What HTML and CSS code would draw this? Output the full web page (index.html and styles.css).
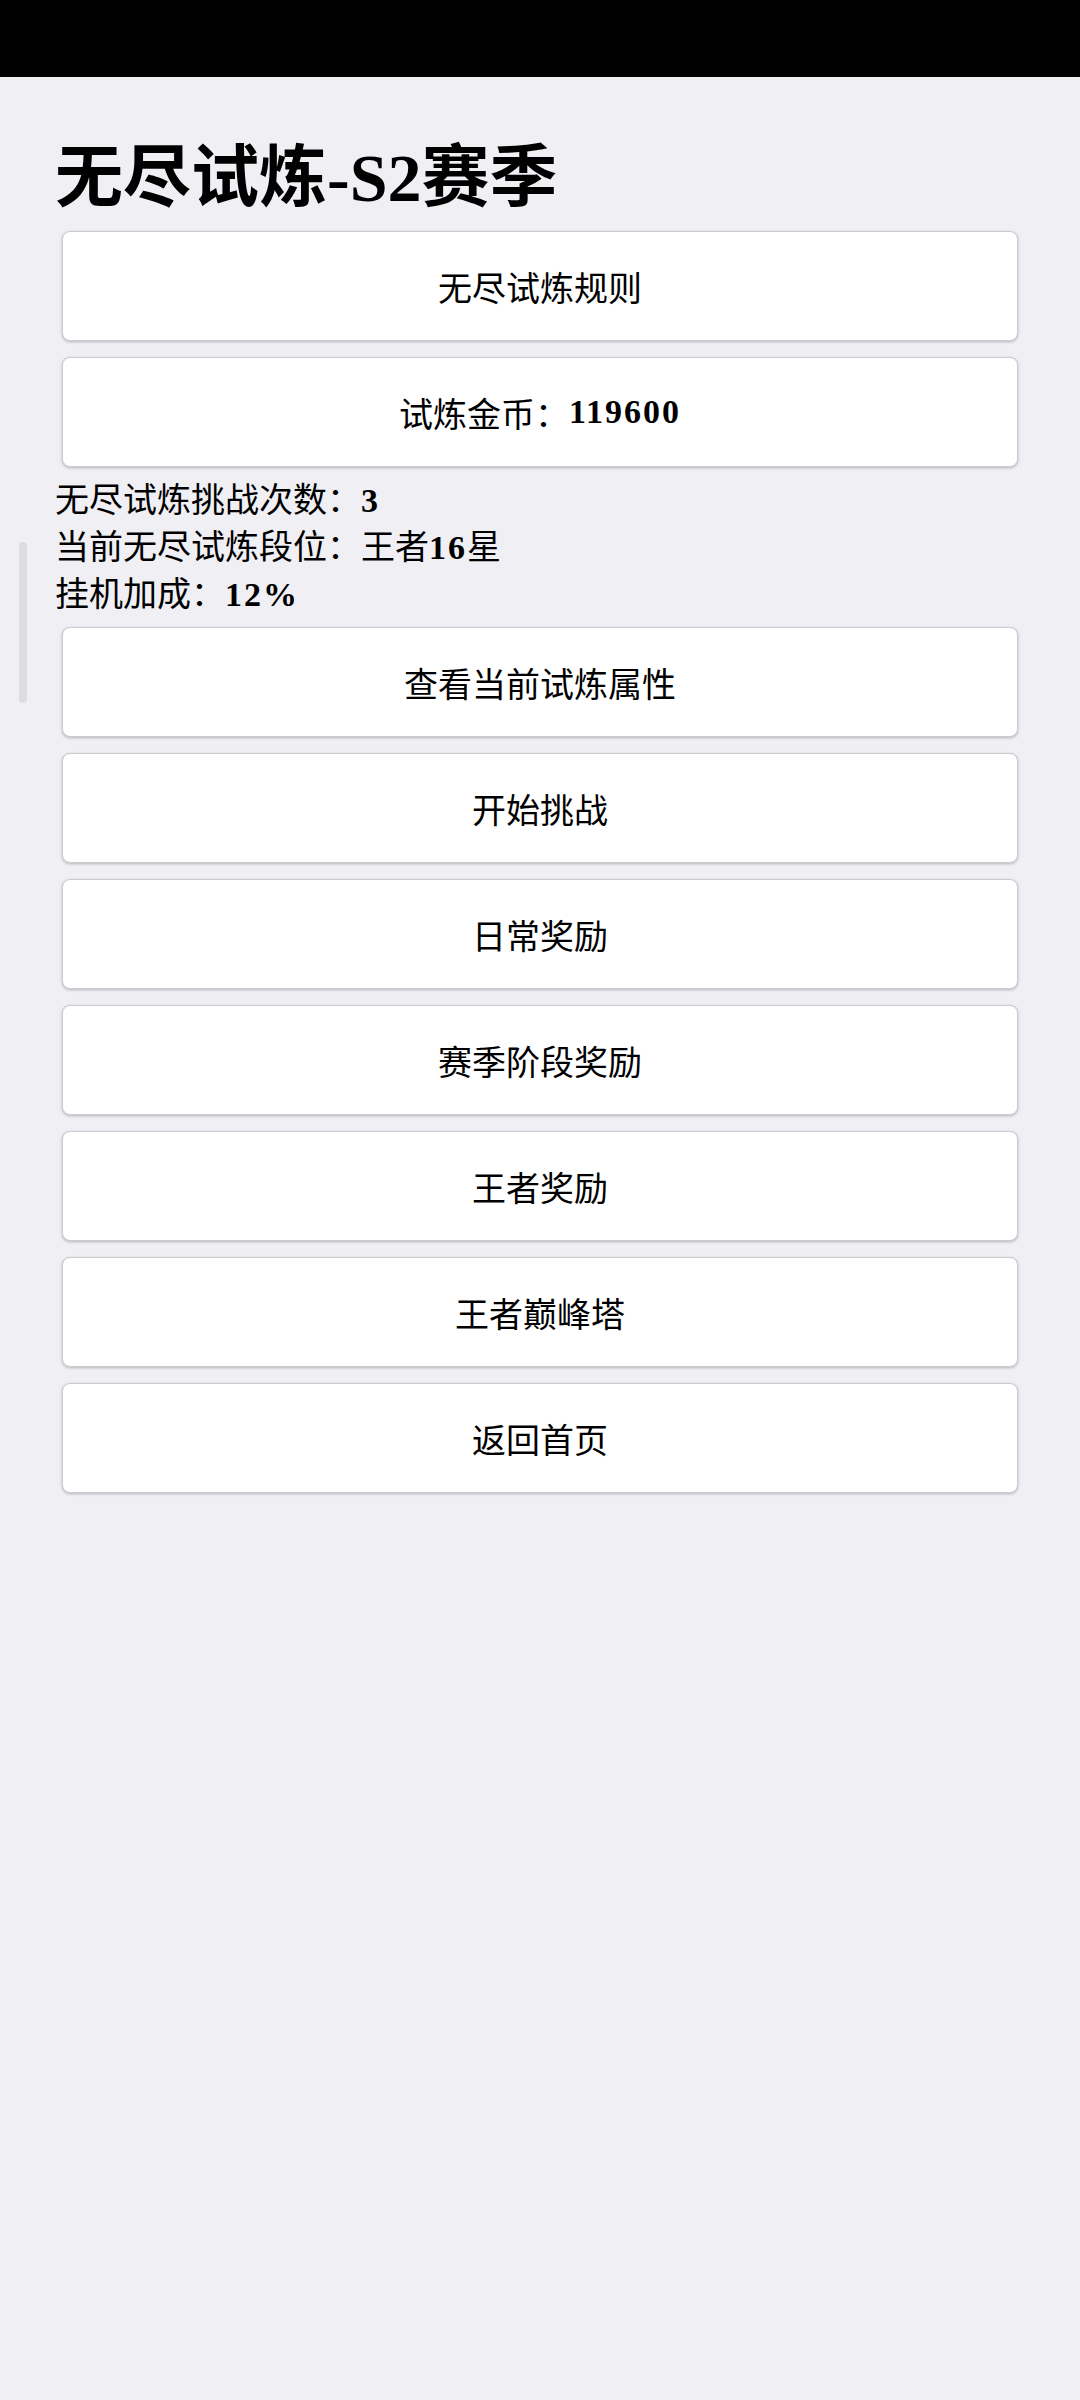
FILE: index.html
```html
<!DOCTYPE html>
<html lang="zh-CN">
<head>
<meta charset="utf-8">
<meta name="viewport" content="width=1080">
<title>无尽试炼-S2赛季</title>
<link rel="stylesheet" href="styles.css">
</head>
<body>
<div class="status-bar"></div>
<div class="scroll-indicator"></div>
<main class="page">
  <h1 class="title">无尽试炼-S2赛季</h1>
  <div class="btn">无尽试炼规则</div>
  <div class="btn">试炼金币：<span class="num">119600</span></div>
  <div class="info">
    <div class="info-line">无尽试炼挑战次数：<span class="num">3</span></div>
    <div class="info-line">当前无尽试炼段位：王者<span class="num">16</span>星</div>
    <div class="info-line">挂机加成：<span class="num">12%</span></div>
  </div>
  <div class="btn">查看当前试炼属性</div>
  <div class="btn">开始挑战</div>
  <div class="btn">日常奖励</div>
  <div class="btn">赛季阶段奖励</div>
  <div class="btn">王者奖励</div>
  <div class="btn">王者巅峰塔</div>
  <div class="btn">返回首页</div>
</main>
</body>
</html>
```

FILE: styles.css
```css
html, body {
  margin: 0;
  padding: 0;
}

body {
  background: #efeff4;
  color: #000;
  font-family: "Liberation Serif", "Noto Sans CJK SC", serif;
  font-size: 34px;
  min-height: 2400px;
  position: relative;
}

.status-bar {
  height: 77px;
  background: #000;
}

.page {
  padding: 0 55px;
}

.title {
  margin: 60px 0 12px;
  font-size: 68px;
  line-height: 82px;
  font-weight: bold;
}

.btn {
  box-sizing: border-box;
  height: 110px;
  margin: 0 7px 16px;
  background: #fff;
  border: 1px solid #cbcbd0;
  border-radius: 8px;
  box-shadow: 0 1px 3px rgba(0, 0, 0, 0.24);
  display: flex;
  align-items: center;
  justify-content: center;
  font-size: 34px;
}

.info {
  margin: -6px 0 9px;
}

.info-line {
  line-height: 47px;
}

.num {
  font-weight: bold;
  letter-spacing: 2px;
}

.scroll-indicator {
  position: absolute;
  left: 19px;
  top: 542px;
  width: 8px;
  height: 161px;
  border-radius: 4px;
  background: #dcdce1;
}
```
